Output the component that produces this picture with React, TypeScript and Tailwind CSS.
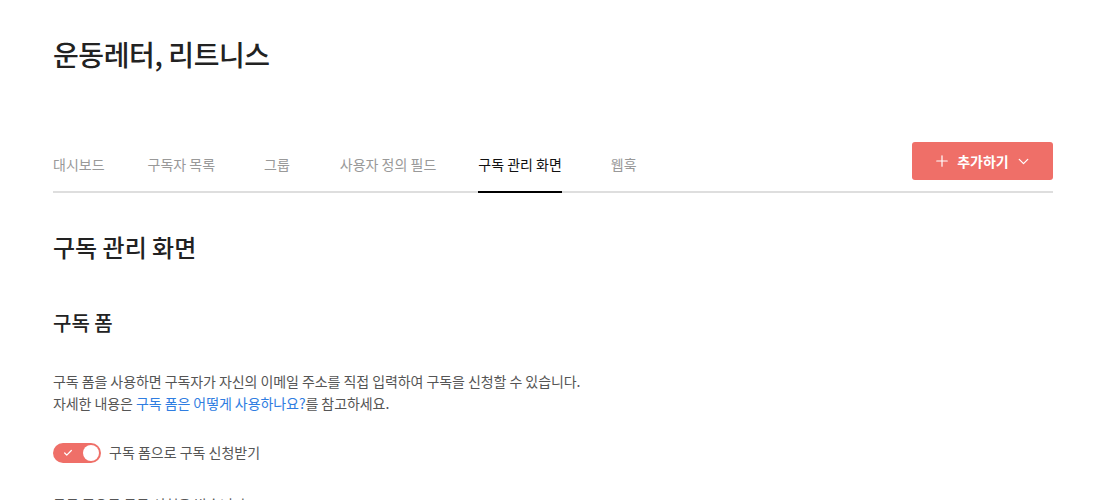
import { Plus, ChevronDown, Check } from "lucide-react";

const tabs = [
  { label: "대시보드", space: "mr-[43px]" },
  { label: "구독자 목록", space: "mr-[49px]" },
  { label: "그룹", space: "mr-[50px]" },
  { label: "사용자 정의 필드", space: "mr-[42px]" },
  { label: "구독 관리 화면", space: "mr-[49px]" },
  { label: "웹훅", space: "" },
];

const App = () => {
  return (
    <div
      className="min-h-screen bg-white px-[53px] text-[#222]"
      style={{ fontFamily: '"Noto Sans CJK KR", "Noto Sans", sans-serif' }}
    >
      <div className="w-[1000px]">
        <h1 className="pt-[34px] text-[28px] font-medium leading-[40px] tracking-[-0.4px]">
          운동레터, 리트니스
        </h1>

        <div className="mt-[68px] flex items-end justify-between border-b-2 border-[#dedede]">
          <div className="flex">
            {tabs.map((t, i) => (
              <div
                key={i}
                className={
                  "-mb-[2px] pb-[17px] text-[14px] leading-[20px] " +
                  t.space +
                  (t.label === "구독 관리 화면"
                    ? " border-b-2 border-black text-[#111]"
                    : " border-b-2 border-transparent text-[#999]")
                }
              >
                {t.label}
              </div>
            ))}
          </div>
          <button className="mb-[11px] flex h-[38px] w-[141px] items-center justify-center gap-[6px] rounded-[3px] bg-[#ef6f68] text-[14px] font-bold text-white">
            <Plus size={18} strokeWidth={1.6} />
            <span>추가하기</span>
            <ChevronDown size={17} strokeWidth={1.8} />
          </button>
        </div>

        <h2 className="mt-[37px] text-[24px] font-medium leading-[34px]">구독 관리 화면</h2>

        <h3 className="mt-[45px] text-[20px] font-medium leading-[28px]">구독 폼</h3>

        <div className="mt-[33px] text-[14px] leading-[22px] tracking-[-0.07px] text-[#555]">
          <p>구독 폼을 사용하면 구독자가 자신의 이메일 주소를 직접 입력하여 구독을 신청할 수 있습니다.</p>
          <p>
            자세한 내용은 <span className="text-[#2f7de1]">구독 폼은 어떻게 사용하나요?</span>를 참고하세요.
          </p>
        </div>

        <label className="mt-[28px] flex items-center gap-[8px] text-[14px] text-[#555]">
          <span className="relative flex h-[20px] w-[48px] items-center rounded-full bg-[#ef6f68]">
            <Check size={10} strokeWidth={3} className="absolute left-[10px] text-white" />
            <span className="absolute right-[2px] h-[16px] w-[16px] rounded-full bg-white" />
          </span>
          구독 폼으로 구독 신청받기
        </label>

        <p className="mt-[30px] text-[14px] leading-[22px] text-[#555]">구독 폼으로 구독 신청을 받습니다</p>
      </div>
    </div>
  );
};

export default App;
